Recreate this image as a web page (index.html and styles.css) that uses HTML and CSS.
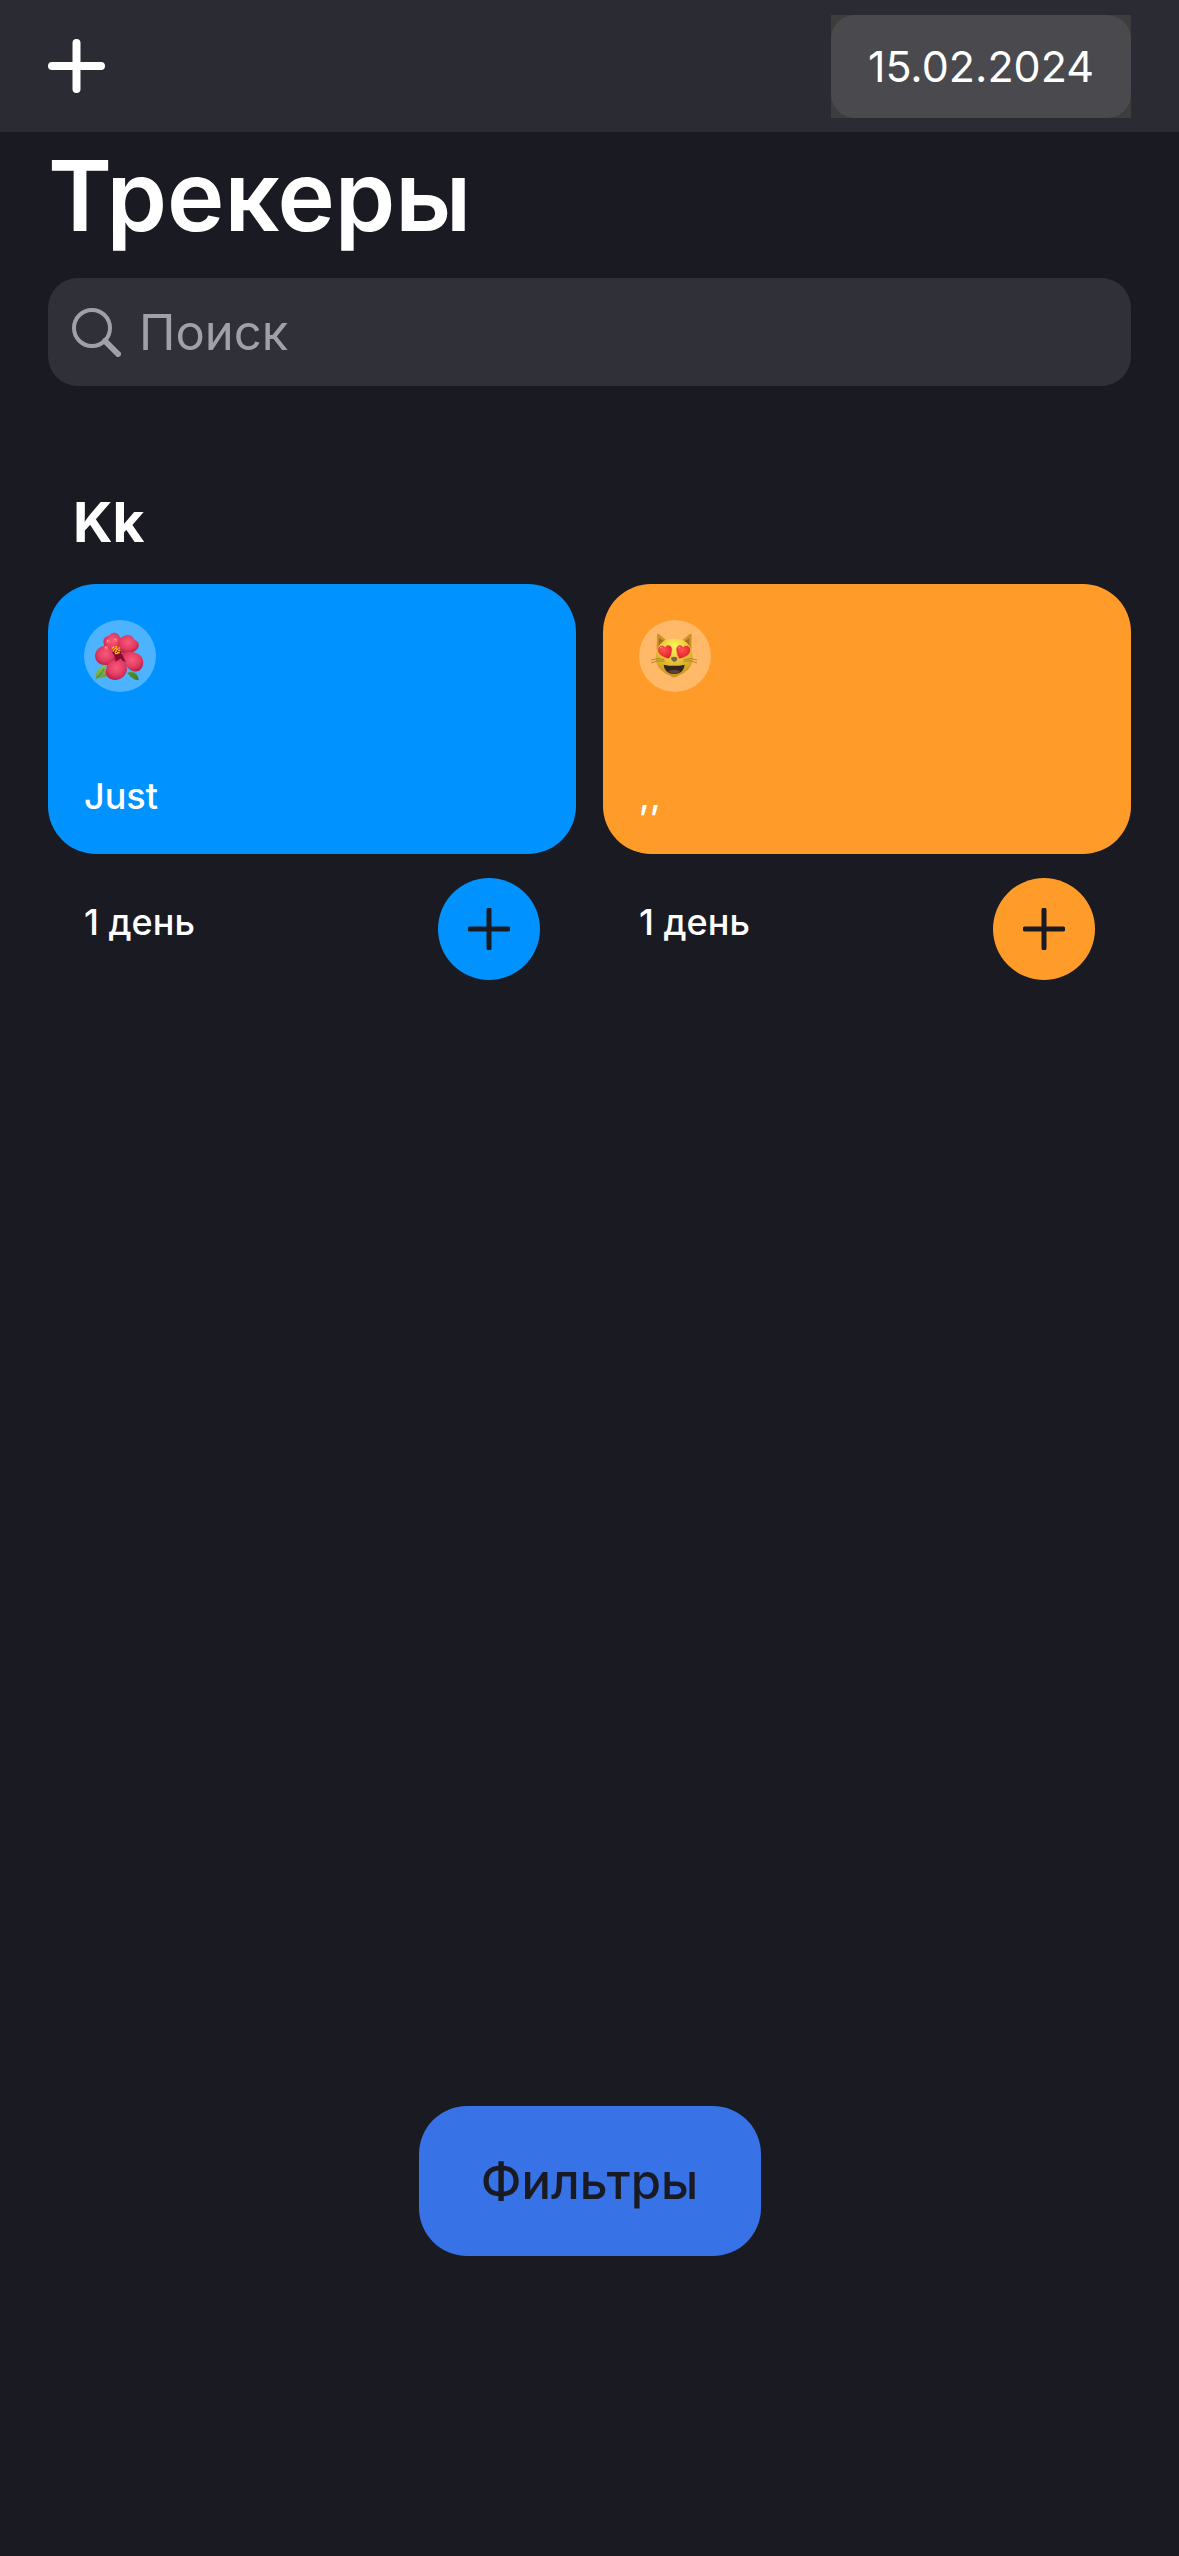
FILE: index.html
```html
<!DOCTYPE html>
<html lang="ru">
<head>
<meta charset="utf-8">
<meta name="viewport" content="width=device-width, initial-scale=1">
<title>Трекеры</title>
<link rel="stylesheet" href="styles.css">
</head>
<body>
<div class="screen">
  <header class="navbar">
    <button class="add-button" type="button" aria-label="Добавить трекер">
      <svg class="add-icon" viewBox="0 0 57 54" aria-hidden="true"><path d="M28.5 4v46M4 27h49" /></svg>
    </button>
    <button class="date-button" type="button"><time class="date-label" datetime="2024-02-15">15.02.2024</time></button>
  </header>

  <main class="content">
    <h1 class="title">Трекеры</h1>

    <label class="search">
      <svg class="search-icon" viewBox="0 0 49 49" aria-hidden="true"><circle cx="20" cy="20" r="18"/><path class="search-handle" d="M33 33l13 13"/></svg>
      <input class="search-input" type="search" placeholder="Поиск" aria-label="Поиск">
    </label>

    <section class="category">
      <h2 class="category-title">Kk</h2>
      <div class="tracker-grid">
        <article class="tracker tracker-blue">
          <div class="card">
            <span class="emoji">
              <svg class="emoji-art" viewBox="0 0 216 216" role="img" aria-label="Гибискус">
                <defs>
                  <radialGradient id="petal" cx=".5" cy=".4" r=".65"><stop offset="0" stop-color="#f95a7c"/><stop offset=".6" stop-color="#e23a60"/><stop offset="1" stop-color="#ac1840"/></radialGradient>
                  <linearGradient id="leaf" x1="0" y1="0" x2="1" y2="1"><stop offset="0" stop-color="#8fc653"/><stop offset="1" stop-color="#3f7a2a"/></linearGradient>
                </defs>
                <path fill="url(#leaf)" d="M35 176C34 151 45 138 64 137L69 169Q52 175 35 176zM129 158Q158 148 165 180Q145 181 129 158z"/>
                <path fill="none" stroke="#396d29" stroke-width="2" d="M37 174Q53 164 60 147M134 160Q151 162 162 177"/>
                <path fill="url(#petal)" d="M61 77C53 58 63 49 77 46C84 34 101 36 107 50C117 60 113 77 99 90L80 99Q65 91 61 77z"/>
                <path fill="url(#petal)" d="M100 88C98 64 113 46 130 45C142 43 149 54 153 60C166 65 168 79 159 88C149 101 119 102 106 96z"/>
                <path fill="url(#petal)" d="M93 125C76 141 46 137 38 123C29 109 34 91 46 84C54 74 77 80 84 91C92 102 97 114 93 125z"/>
                <path fill="url(#petal)" d="M111 103C127 91 158 94 171 109C183 124 178 145 165 152C145 161 126 143 119 123z"/>
                <path fill="url(#petal)" d="M96 119C116 113 130 134 129 151C124 171 108 180 95 180C73 180 60 164 67 147C67 132 78 121 96 119z"/>
                <path fill="#8b092c" d="M88 92C98 83 110 90 113 101L126 127Q113 122 110 116L94 125Q94 105 83 96z"/>
                <path fill="none" stroke="#ffc400" stroke-width="5" stroke-dasharray="4 3" d="M84 83L104 99M86 92l17 9M98 78l-3 27M106 82l-2 19M87 80l22 13"/>
                <g fill="#ff666b"><circle cx="73" cy="64" r="6"/><circle cx="95" cy="60" r="6"/><circle cx="67" cy="84" r="6"/></g>
                <g fill="#ffc5bb"><circle cx="71" cy="62" r="2"/><circle cx="93" cy="58" r="2"/><circle cx="65" cy="82" r="2"/></g>
              </svg>
            </span>
            <h3 class="tracker-name">Just</h3>
          </div>
          <div class="tracker-footer">
            <p class="tracker-days">1 день</p>
            <button class="done-button" type="button" aria-label="Отметить Just"><svg class="done-icon" viewBox="0 0 42 42" aria-hidden="true"><path d="M21 2v38M2 21h38"/></svg></button>
          </div>
        </article>

        <article class="tracker tracker-orange">
          <div class="card">
            <span class="emoji">
              <svg class="emoji-art" viewBox="0 0 216 216" role="img" aria-label="Влюблённый кот">
                <defs>
                  <radialGradient id="fur" cx=".5" cy=".2" r=".8"><stop offset="0" stop-color="#fff45b"/><stop offset=".55" stop-color="#e4bf35"/><stop offset="1" stop-color="#c98d1d"/></radialGradient>
                  <radialGradient id="heart" cx=".4" cy=".3" r=".7"><stop offset="0" stop-color="#ff5551"/><stop offset="1" stop-color="#e91d2d"/></radialGradient>
                </defs>
                <path fill="#cf922b" d="M53 90L54 45Q55 39 61 43L87 65zM157 90L158 45Q157 39 151 43L125 65z"/>
                <path fill="#a96c24" d="M59 78L60 54L79 65zM151 78L151 54L134 65z"/>
                <path fill="url(#fur)" d="M105 56C134 55 149 67 157 90C166 114 160 137 145 151C131 163 119 166 114 170Q106 174 98 170C92 166 80 163 67 151C51 137 47 114 54 90C62 67 77 56 105 56z"/>
                <g fill="none" stroke="#917023" stroke-width="2"><path d="M36 120Q57 112 76 119M36 129Q56 118 77 124M174 120Q153 112 134 119M174 129Q154 118 133 124"/></g>
                <path fill="url(#heart)" stroke="#c51b25" stroke-width="1" d="M90 115C74 112 60 104 58 93C56 77 73 74 78 84C83 71 100 76 98 91Q97 105 90 115z"/>
                <path fill="url(#heart)" stroke="#c51b25" stroke-width="1" d="M121 115C137 112 152 104 153 93C155 77 138 74 132 84C128 71 111 76 113 91Q114 105 121 115z"/>
                <path fill="#ffaaa0" d="M62 87Q63 79 70 81Q66 83 62 87zM117 87Q118 79 125 81Q121 83 117 87z"/>
                <path fill="#80614b" d="M96 113Q105 108 115 113Q116 121 106 126Q96 121 96 113z"/>
                <path fill="#342521" d="M74 134Q105 141 137 134C135 154 120 162 105 162C90 162 76 153 74 134z"/>
                <path fill="#5e4136" d="M87 154Q105 145 124 154Q105 169 87 154z"/>
              </svg>
            </span>
            <h3 class="tracker-name">,,</h3>
          </div>
          <div class="tracker-footer">
            <p class="tracker-days">1 день</p>
            <button class="done-button" type="button" aria-label="Отметить ,,"><svg class="done-icon" viewBox="0 0 42 42" aria-hidden="true"><path d="M21 2v38M2 21h38"/></svg></button>
          </div>
        </article>
      </div>
    </section>
  </main>

  <footer class="actions">
    <button class="filter-button" type="button">Фильтры</button>
  </footer>
</div>
</body>
</html>
```
FILE: styles.css
```css
* {
  box-sizing: border-box;
}

body {
  margin: 0;
  background: #1a1b22;
  color: #fff;
  font-family: Inter, "Liberation Sans", sans-serif;
}

h1, h2, h3, p {
  margin: 0;
}

button {
  border: 0;
  padding: 0;
  font: inherit;
  cursor: pointer;
}

svg {
  display: block;
}

.screen {
  min-height: 100vh;
  display: flex;
  flex-direction: column;
}

.navbar {
  display: flex;
  align-items: center;
  justify-content: space-between;
  height: 132px;
  padding: 0 48px;
  background: #2a2b33;
}

.add-button {
  background: none;
}

.add-icon {
  width: 57px;
  height: 54px;
  fill: none;
  stroke: #fff;
  stroke-width: 8;
  stroke-linecap: round;
}

.date-button {
  width: 300px;
  background: #3d3d3d;
  color: #fff;
}

.date-label {
  display: block;
  border-radius: 24px;
  background: #4a4a4e;
  font-size: 43px;
  line-height: 103px;
  text-align: center;
}

.content {
  padding: 0 48px;
}

.title {
  padding-top: 4px;
  font-size: 97px;
  font-weight: 600;
  line-height: 120px;
}

.search {
  display: flex;
  align-items: center;
  gap: 18px;
  height: 108px;
  margin-top: 22px;
  padding: 0 24px;
  border-radius: 30px;
  background: #303039;
}

.search-icon {
  flex: none;
  width: 49px;
  height: 49px;
  fill: none;
  stroke: #a0a0aa;
  stroke-width: 4;
}

.search-handle {
  stroke-width: 6;
  stroke-linecap: round;
}

.search-input {
  flex: 1;
  min-width: 0;
  border: 0;
  padding: 2px 0 0;
  outline: 0;
  background: none;
  color: #fff;
  font: 400 49px/60px Inter, "Liberation Sans", sans-serif;
  appearance: none;
}

.search-input::placeholder {
  color: #a0a0aa;
  opacity: 1;
}

.category {
  margin-top: 102px;
}

.category-title {
  padding-left: 25px;
  font-size: 55px;
  font-weight: 700;
  line-height: 68px;
}

.tracker-grid {
  display: grid;
  grid-template-columns: 1fr 1fr;
  gap: 27px;
  margin-top: 28px;
}

.tracker-blue {
  --accent: #0092ff;
}

.tracker-orange {
  --accent: #ff9b28;
}

.card {
  display: flex;
  flex-direction: column;
  justify-content: space-between;
  min-height: 270px;
  padding: 36px;
  border-radius: 48px;
  background: var(--accent);
}

.emoji {
  width: 72px;
  height: 72px;
  border-radius: 50%;
  background: rgb(255 255 255 / 30%);
}

.emoji-art {
  width: 100%;
  height: 100%;
}

.tracker-name,
.tracker-days {
  font-size: 36px;
  font-weight: 500;
  line-height: 44px;
}

.tracker-footer {
  display: flex;
  align-items: flex-start;
  justify-content: space-between;
  padding: 24px 36px;
}

.tracker-days {
  padding-top: 22px;
}

.done-button {
  display: grid;
  place-items: center;
  width: 102px;
  height: 102px;
  border-radius: 50%;
  background: var(--accent);
}

.done-icon {
  width: 42px;
  height: 42px;
  fill: none;
  stroke: #1a1b22;
  stroke-width: 5;
  stroke-linecap: round;
}

.actions {
  display: flex;
  justify-content: center;
  margin-top: auto;
  padding-bottom: 300px;
}

.filter-button {
  min-width: 342px;
  padding: 46px 60px 44px;
  border-radius: 48px;
  background: #3772e7;
  color: #1a1b22;
  font-size: 49px;
  font-weight: 500;
  line-height: 60px;
}
```
